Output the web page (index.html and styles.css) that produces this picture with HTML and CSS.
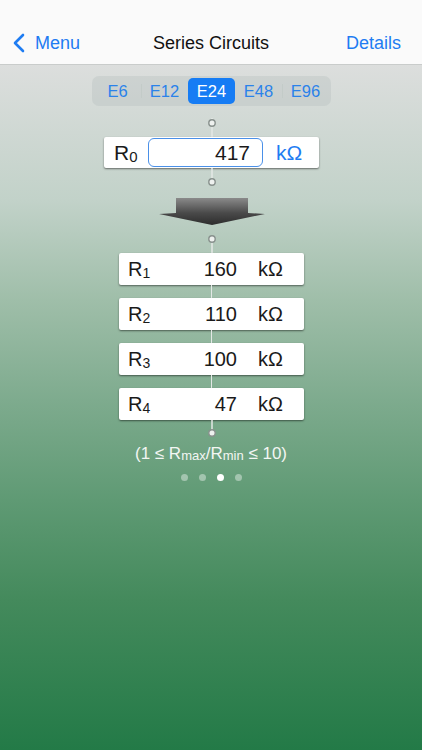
FILE: index.html
```html
<!DOCTYPE html>
<html lang="en">
<head>
    <meta charset="UTF-8">
    <meta name="viewport" content="width=device-width, initial-scale=1.0">
    <title>Series Circuits</title>
    <link rel="stylesheet" href="styles.css">
</head>
<body>

<header class="topbar">
    <div class="statusbar"></div>
    <nav class="navbar">
        <a class="nav-back" href="#">
            <svg width="14" height="20" viewBox="0 0 14 20"><path d="M11 2 L3 10 L11 18" fill="none" stroke="#1e7cf2" stroke-width="2.6" stroke-linecap="round" stroke-linejoin="round"/></svg>
            <span>Menu</span>
        </a>
        <span class="nav-title">Series Circuits</span>
        <a class="nav-action" href="#">Details</a>
    </nav>
</header>

<main class="calc">
    <div class="segments">
        <span class="seg">E6</span>
        <span class="seg sep">E12</span>
        <span class="seg active">E24</span>
        <span class="seg">E48</span>
        <span class="seg sep-left">E96</span>
    </div>

    <!-- pin above the target resistor -->
    <svg class="wire wire-top" width="12" height="19" viewBox="0 0 12 19">
        <line x1="6" y1="0" x2="6" y2="19" stroke="#e4e8e6" stroke-width="1.5"/>
        <circle cx="6" cy="5" r="3.2" fill="#eef1ef" stroke="#88918d" stroke-width="1.4"/>
    </svg>

    <div class="card target">
        <span class="rlabel">R<sub>0</sub></span>
        <div class="input">417</div>
        <span class="unit">kΩ</span>
    </div>

    <svg class="wire" width="12" height="19" viewBox="0 0 12 19">
        <line x1="6" y1="0" x2="6" y2="14" stroke="#e4e8e6" stroke-width="1.5"/>
        <circle cx="6" cy="14" r="3.2" fill="#eef1ef" stroke="#88918d" stroke-width="1.4"/>
    </svg>

    <svg class="arrow" width="108" height="30" viewBox="0 0 108 30">
        <defs>
            <linearGradient id="arrowFill" x1="0" y1="0" x2="0" y2="1">
                <stop offset="0" stop-color="#8a8a8a"/>
                <stop offset="0.55" stop-color="#4a4a4a"/>
                <stop offset="1" stop-color="#2c2c2c"/>
            </linearGradient>
        </defs>
        <polygon points="18,1 90,1 90,16 107,17 54,28 1,17 18,16" fill="url(#arrowFill)"/>
    </svg>

    <svg class="wire wire-in" width="12" height="19" viewBox="0 0 12 19">
        <line x1="6" y1="5" x2="6" y2="19" stroke="#e4e8e6" stroke-width="1.5"/>
        <circle cx="6" cy="5" r="3.2" fill="#eef1ef" stroke="#88918d" stroke-width="1.4"/>
    </svg>

    <div class="chain">
        <div class="card row">
            <span class="rlabel">R<sub>1</sub></span>
            <span class="value">160</span>
            <span class="unit">kΩ</span>
        </div>
        <div class="link"></div>
        <div class="card row">
            <span class="rlabel">R<sub>2</sub></span>
            <span class="value">110</span>
            <span class="unit">kΩ</span>
        </div>
        <div class="link"></div>
        <div class="card row">
            <span class="rlabel">R<sub>3</sub></span>
            <span class="value">100</span>
            <span class="unit">kΩ</span>
        </div>
        <div class="link"></div>
        <div class="card row">
            <span class="rlabel">R<sub>4</sub></span>
            <span class="value">47</span>
            <span class="unit">kΩ</span>
        </div>
    </div>

    <svg class="wire" width="12" height="18" viewBox="0 0 12 18">
        <line x1="6" y1="0" x2="6" y2="13" stroke="#e4e8e6" stroke-width="1.5"/>
        <circle cx="6" cy="13" r="3.2" fill="#eef1ef" stroke="#88918d" stroke-width="1.4"/>
    </svg>

    <p class="hint">(1 ≤ R<sub>max</sub>/R<sub>min</sub> ≤ 10)</p>

    <div class="dots">
        <span class="dot"></span>
        <span class="dot"></span>
        <span class="dot on"></span>
        <span class="dot"></span>
    </div>
</main>

</body>
</html>
```

FILE: styles.css
```css
body {
    font-family: 'Liberation Sans', Arial, sans-serif;
    margin: 0;
    padding: 0;
    width: 422px;
    min-height: 750px;
    background: linear-gradient(to bottom,
        #dcdedd 65px,
        #c2d2c9 200px,
        #9fbea9 300px,
        #7eab8e 400px,
        #5f9a74 500px,
        #448a5c 600px,
        #237a47 750px);
    color: #1a1a1a;
}

.topbar {
    background-color: #fafafa;
    border-bottom: 1px solid #c9cccb;
}

.statusbar {
    height: 22px;
}

.navbar {
    height: 42px;
    display: flex;
    align-items: center;
    justify-content: space-between;
    padding: 0 21px 0 12px;
    position: relative;
    font-size: 18px;
}

.navbar a {
    color: #1e7cf2;
    text-decoration: none;
}

.nav-back {
    display: flex;
    align-items: center;
    gap: 9px;
}

.nav-title {
    position: absolute;
    left: 0;
    right: 0;
    text-align: center;
    pointer-events: none;
    color: #111;
}

.calc {
    display: flex;
    flex-direction: column;
    align-items: center;
    padding-top: 11px;
}

/* E-series picker */
.segments {
    display: grid;
    grid-template-columns: repeat(5, 47px);
    width: 235px;
    height: 26px;
    padding: 2px;
    background-color: rgba(180, 190, 188, 0.35);
    border-radius: 7px;
    margin-left: 1px;
}

.seg {
    display: flex;
    align-items: center;
    justify-content: center;
    font-size: 16.5px;
    color: #2a82ea;
    border-radius: 5px;
    position: relative;
}

.seg.sep::before,
.seg.sep-left::before {
    content: "";
    position: absolute;
    left: 0;
    top: 6px;
    bottom: 6px;
    width: 1px;
    background-color: #c3cbc8;
}

.seg.active {
    background-color: #167cf4;
    color: #fff;
}

.wire {
    display: block;
    margin-left: 1px;
}

.wire-top {
    margin-top: 12px;
}

.wire-in {
    margin-top: 7px;
}

.card {
    background-color: #fff;
    border-radius: 2px;
    box-shadow: 0 1px 2px rgba(0, 0, 0, 0.5);
    display: flex;
    align-items: center;
    font-size: 19px;
}

.rlabel sub {
    font-size: 14px;
    vertical-align: -2px;
}

.target {
    width: 195px;
    height: 31px;
    padding: 0 10px;
    font-size: 21px;
    margin-left: 1px;
}

.target .rlabel {
    width: 34px;
}

.target .rlabel sub {
    font-size: 15px;
}

.input {
    width: 101px;
    height: 27px;
    border: 1px solid #4a90e8;
    border-radius: 6px;
    text-align: right;
    padding-right: 12px;
    line-height: 27px;
    box-sizing: content-box;
}

.target .unit {
    margin-left: 13px;
    color: #1e7cf2;
}

.arrow {
    display: block;
    margin-top: 10px;
    margin-left: 1px;
}

.chain {
    display: flex;
    flex-direction: column;
    align-items: center;
    margin-left: 1px;
}

.row {
    width: 185px;
    height: 32px;
    padding: 0 20px 0 9px;
    box-sizing: border-box;
    font-size: 20px;
}

.row .rlabel {
    flex: 1;
}

.row .value {
    text-align: right;
}

.row .unit {
    width: 47px;
    padding-left: 21px;
    box-sizing: border-box;
}

.link {
    width: 1.5px;
    height: 13px;
    background-color: #e4e8e6;
}

.hint {
    margin: 6px 0 0;
    font-size: 17px;
    line-height: 20px;
    color: #f3f6f3;
}

.hint sub {
    font-size: 13px;
    vertical-align: -1px;
}

.dots {
    display: flex;
    gap: 11px;
    margin-top: 8px;
    margin-left: 1px;
}

.dot {
    width: 7px;
    height: 7px;
    border-radius: 50%;
    background-color: rgba(255, 255, 255, 0.4);
}

.dot.on {
    background-color: #fff;
}
```
